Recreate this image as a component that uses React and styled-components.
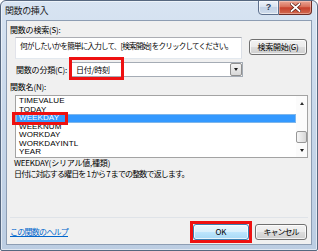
import React from "react";
import styled, { createGlobalStyle } from "styled-components";

const JP = `"Noto Sans CJK JP", "Noto Sans", sans-serif`;
const UI = `"Liberation Sans", "Noto Sans CJK JP", sans-serif`;

const GlobalStyle = createGlobalStyle`
  html, body { margin: 0; padding: 0; background: #ffffff; }
  body { font-family: ${JP}; color: #000; }
  * { box-sizing: border-box; }
`;

const Window = styled.div`
  width: 318px;
  height: 251px;
  border: 1px solid #56677f;
  border-radius: 6px 6px 2px 2px;
  background: linear-gradient(180deg, #d8e4f2 0%, #c7d7ea 45%, #bccde2 100%);
  box-shadow: inset 0 0 0 1px rgba(255, 255, 255, 0.55);
  display: flex;
  flex-direction: column;
  overflow: hidden;
`;

const TitleBar = styled.div`
  height: 19px;
  display: flex;
  justify-content: space-between;
  align-items: flex-start;
`;

const Title = styled.div`
  margin: 4px 0 0 4px;
  font: 9px/11px ${JP};
  letter-spacing: -0.4px;
  color: #1b1b1b;
`;

const Caption = styled.div`
  display: flex;
  margin: -1px 5px 0 0;
`;

const HelpCap = styled.div`
  width: 21px;
  height: 15px;
  border: 1px solid #5d6f8c;
  border-radius: 0 0 0 4px;
  background: linear-gradient(180deg, #eef3fa 0%, #d9e3f0 45%, #c3d2e6 50%, #cfdcec 100%);
  box-shadow: inset 0 0 0 1px rgba(255, 255, 255, 0.6);
  display: flex;
  align-items: center;
  justify-content: center;
  font: bold 9px/9px ${UI};
  color: #2c3d58;
`;

const CloseCap = styled.div`
  width: 33px;
  height: 15px;
  border: 1px solid #6b2b24;
  border-left: none;
  border-radius: 0 0 4px 0;
  background: linear-gradient(180deg, #eaa796 0%, #d9705a 45%, #c7412c 52%, #d06a50 100%);
  box-shadow: inset 0 0 0 1px rgba(255, 220, 210, 0.45);
  display: flex;
  align-items: center;
  justify-content: center;
`;

const Client = styled.div`
  flex: 1;
  margin: 0 5px 5px;
  border: 1px solid #8d9db3;
  background: #f0f0f0;
  display: flex;
  flex-direction: column;
  padding: 4px 3px 0 3px;
`;

const Label = styled.div`
  height: 10px;
  font: 8px/10px ${JP};
  letter-spacing: -0.2px;
  margin-left: ${p => p.$indent || 0}px;
  margin-top: ${p => p.$top || 0}px;
  width: ${p => (p.$w ? `${p.$w}px` : "auto")};
  flex-shrink: 0;
  white-space: nowrap;
`;

const SearchRow = styled.div`
  display: flex;
  align-items: flex-start;
  margin-top: 2px;
`;

const SearchBox = styled.div`
  margin-left: 5px;
  width: 227px;
  height: 22px;
  border: 1px solid #abadb3;
  border-color: #abadb3 #dbdfe6 #e3e9ef #e2e3ea;
  background: #fff;
  padding: 3px 0 0 4px;
  font: 7.6px/10px ${JP};
  letter-spacing: -0.85px;
  white-space: nowrap;
  overflow: hidden;
`;

const Button = styled.div`
  position: relative;
  width: ${p => p.$w}px;
  height: 16px;
  margin-left: ${p => p.$ml || 0}px;
  margin-top: ${p => p.$mt || 0}px;
  border: 1px solid ${p => (p.$primary ? "#3c7fb1" : "#707070")};
  border-radius: 3px;
  background: ${p =>
    p.$primary
      ? "linear-gradient(180deg, #eaf6fd 0%, #d9f0fc 50%, #bee6fd 50%, #a7d9f5 100%)"
      : "linear-gradient(180deg, #f2f2f2 0%, #ebebeb 50%, #dddddd 50%, #cfcfcf 100%)"};
  box-shadow: inset 0 0 0 1px rgba(255, 255, 255, 0.75);
  display: flex;
  align-items: center;
  justify-content: center;
  font: 8px/10px ${JP};
  letter-spacing: ${p => p.$ls || 0}px;
  white-space: nowrap;
  flex-shrink: 0;
`;

const CategoryRow = styled.div`
  display: flex;
  align-items: center;
  height: 15px;
  margin-top: 3px;
`;

const Combo = styled.div`
  position: relative;
  width: 172px;
  height: 15px;
  border: 1px solid #a5acb5;
  background: #fff;
  display: flex;
  align-items: center;
  justify-content: space-between;
`;

const ComboText = styled.div`
  padding-left: 4px;
  font: 8px/10px ${JP};
  letter-spacing: -0.3px;
`;

const ComboArrow = styled.div`
  width: 12px;
  height: 13px;
  border: 1px solid #8f8f8f;
  border-radius: 2px;
  background: linear-gradient(180deg, #f4f4f4 0%, #e6e6e6 50%, #d8d8d8 100%);
  display: flex;
  align-items: center;
  justify-content: center;
`;

const Tri = styled.span`
  width: 0;
  height: 0;
  border-left: 2.5px solid transparent;
  border-right: 2.5px solid transparent;
  ${p =>
    p.$up
      ? "border-bottom: 3px solid #2e2e2e;"
      : "border-top: 3px solid #1e1e1e;"}
`;

const RedBox = styled.div`
  position: absolute;
  left: ${p => p.$l}px;
  top: ${p => p.$t}px;
  width: ${p => p.$w}px;
  height: ${p => p.$h}px;
  border: 3px solid #ee1111;
  pointer-events: none;
`;

const ListBox = styled.div`
  position: relative;
  margin: 3px 0 0 5px;
  width: 293px;
  height: 63px;
  border: 1px solid #a3a3a3;
  background: #fff;
  display: flex;
`;

const Items = styled.div`
  flex: 1;
  padding-top: 1px;
  overflow: hidden;
`;

const Item = styled.div`
  height: 8.5px;
  line-height: 8.5px;
  padding-left: 3px;
  font-family: ${UI};
  font-size: 8px;
  letter-spacing: 0.1px;
  color: ${p => (p.$selected ? "#fff" : "#000")};
  background: ${p => (p.$selected ? "#3399ff" : "transparent")};
  box-shadow: ${p => (p.$selected ? "inset 0 0 0 1px #7fb6ea" : "none")};
`;

const ScrollBar = styled.div`
  width: 11px;
  display: flex;
  flex-direction: column;
  background: #fbfbfb;
`;

const ScrollBtn = styled.div`
  height: 14px;
  display: flex;
  align-items: center;
  justify-content: center;
`;

const Track = styled.div`
  flex: 1;
  display: flex;
  flex-direction: column;
  justify-content: flex-end;
`;

const Thumb = styled.div`
  height: 12px;
  border: 1px solid #979797;
  border-radius: 2px;
  background: linear-gradient(90deg, #f6f6f6 0%, #e7e7e7 50%, #d7d7d7 100%);
`;

const Desc = styled.div`
  margin: ${p => p.$top}px 0 0 4px;
  height: 9px;
  font: 8px/9px ${JP};
  letter-spacing: ${p => p.$ls}px;
  white-space: pre;
`;

const Spacer = styled.div`
  flex: 1;
`;

const Separator = styled.div`
  height: 1px;
  background: #dfe3e8;
`;

const BottomRow = styled.div`
  height: 26px;
  display: flex;
  align-items: flex-start;
  padding-top: 6px;
`;

const HelpLink = styled.a`
  margin-top: 3px;
  font: 8px/10px ${JP};
  letter-spacing: -0.75px;
  color: #0066cc;
  text-decoration: underline;
`;

const Buttons = styled.div`
  margin-left: auto;
  margin-right: 1px;
  display: flex;
  gap: 6px;
`;

const functions = ["TIMEVALUE", "TODAY", "WEEKDAY", "WEEKNUM", "WORKDAY", "WORKDAYINTL", "YEAR"];

export default function App() {
  return (
    <>
      <GlobalStyle />
      <Window>
        <TitleBar>
          <Title>関数の挿入</Title>
          <Caption>
            <HelpCap>?</HelpCap>
            <CloseCap>
              <svg width="11" height="9" viewBox="0 0 11 9">
                <path
                  d="M1.5 1 L9.5 8 M9.5 1 L1.5 8"
                  stroke="#5a1a12"
                  strokeWidth="3.2"
                  strokeLinecap="square"
                />
                <path
                  d="M1.5 1 L9.5 8 M9.5 1 L1.5 8"
                  stroke="#ffffff"
                  strokeWidth="1.8"
                  strokeLinecap="square"
                />
              </svg>
            </CloseCap>
          </Caption>
        </TitleBar>
        <Client>
          <Label>関数の検索(S):</Label>
          <SearchRow>
            <SearchBox>何がしたいかを簡単に入力して、[検索開始] をクリックしてください。</SearchBox>
            <Button $w={58} $ml={7} $mt={2} $ls={-0.3}>検索開始(G)</Button>
          </SearchRow>
          <CategoryRow>
            <Label $indent={6} $w={55}>関数の分類(C):</Label>
            <Combo>
              <ComboText>日付/時刻</ComboText>
              <ComboArrow>
                <Tri />
              </ComboArrow>
              <RedBox $l={-3} $t={-6} $w={55} $h={23} />
            </Combo>
          </CategoryRow>
          <Label $top={5}>関数名(N):</Label>
          <ListBox>
            <Items>
              {functions.map(name => (
                <Item key={name} $selected={name === "WEEKDAY"}>
                  {name}
                </Item>
              ))}
            </Items>
            <ScrollBar>
              <ScrollBtn>
                <Tri $up />
              </ScrollBtn>
              <Track>
                <Thumb />
              </Track>
              <ScrollBtn>
                <Tri />
              </ScrollBtn>
            </ScrollBar>
            <RedBox $l={-4} $t={16} $w={56} $h={13} />
          </ListBox>
          <Desc $top={0} $ls={-0.2}>WEEKDAY(シリアル値,種類)</Desc>
          <Desc $top={2} $ls={-0.85}>日付に対応する曜日を 1 から 7 までの整数で返します。</Desc>
          <Spacer />
          <Separator />
          <BottomRow>
            <HelpLink>この関数のヘルプ</HelpLink>
            <Buttons>
              <Button $w={56} $primary>
                OK
                <RedBox $l={-4} $t={-4} $w={62} $h={22} />
              </Button>
              <Button $w={52} $ls={-1}>キャンセル</Button>
            </Buttons>
          </BottomRow>
        </Client>
      </Window>
    </>
  );
}
